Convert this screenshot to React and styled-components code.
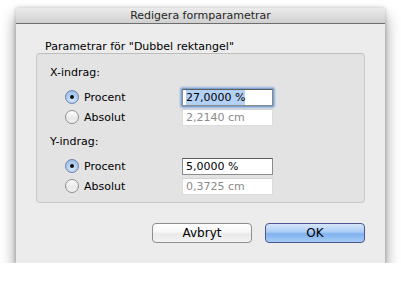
import React from "react";
import styled, { createGlobalStyle } from "styled-components";

const Global = createGlobalStyle`
  html, body { margin: 0; padding: 0; background: #ffffff; }
  body { font-family: "DejaVu Sans", "Lucida Grande", sans-serif; font-size: 11px; color: #000; }
`;

const Page = styled.div`
  padding: 8px 0 0 16px;
`;

const Window = styled.div`
  width: 369px;
  height: 255px;
  display: flex;
  flex-direction: column;
  background: #ececec;
  box-shadow: 0 9px 14px rgba(0, 0, 0, 0.45), 0 0 4px rgba(0, 0, 0, 0.22);
`;

const TitleBar = styled.div`
  height: 15px;
  flex: none;
  display: flex;
  align-items: center;
  justify-content: center;
  background: linear-gradient(#ebebeb, #d0d0d0);
  border-bottom: 1px solid #6d6d6d;
  color: #262626;
  font-size: 11px;
  line-height: 15px;
`;

const Body = styled.div`
  flex: 1;
  display: flex;
  flex-direction: column;
  padding: 16px 20px 20px 20px;
`;

const GroupLabel = styled.div`
  padding-left: 9px;
  height: 13px;
  line-height: 13px;
`;

const GroupBox = styled.div`
  height: 150px;
  box-sizing: border-box;
  border: 1px solid #c9c9c9;
  border-top-color: #bdbdbd;
  border-radius: 4px;
  background: #e3e3e3;
  padding: 12px 13px 0 13px;
  display: flex;
  flex-direction: column;
`;

const Section = styled.div`
  display: flex;
  flex-direction: column;
  margin-top: ${(p) => p.$top || 0}px;
`;

const SectionLabel = styled.div`
  height: 14px;
  line-height: 14px;
  margin-bottom: 7px;
`;

const Row = styled.div`
  height: 20px;
  display: flex;
  align-items: center;
  padding-left: 15px;
`;

const Radio = styled.span`
  width: 14px;
  height: 14px;
  box-sizing: border-box;
  border-radius: 50%;
  flex: none;
  border: 1px solid ${(p) => (p.$on ? "#6d82a8" : "#8e8e8e")};
  background: ${(p) =>
    p.$on
      ? "radial-gradient(circle at 50% 70%, #d4e6fb 0%, #a9c9ef 60%, #8fb3e2 100%)"
      : "linear-gradient(#ffffff, #e8e8e8 60%, #f4f4f4)"};
  display: flex;
  align-items: center;
  justify-content: center;
  &::after {
    content: "";
    width: 4px;
    height: 4px;
    border-radius: 50%;
    background: #111;
    display: ${(p) => (p.$on ? "block" : "none")};
  }
`;

const OptionLabel = styled.span`
  margin-left: 5px;
  width: 98px;
  flex: none;
`;

const Field = styled.div`
  width: 91px;
  height: 17px;
  box-sizing: border-box;
  background: #fff;
  border: 1px solid ${(p) => (p.$disabled ? "#dcdcdc" : "#8c8c8c")};
  border-top-color: ${(p) => (p.$disabled ? "#d2d2d2" : "#5e5e5e")};
  box-shadow: ${(p) =>
    p.$focus ? "0 0 0 1px #7da2ce, 0 0 2px 2px #8fb3e0" : "none"};
  border-radius: ${(p) => (p.$focus ? "1px" : "0")};
  padding-left: 3px;
  display: flex;
  align-items: center;
  color: ${(p) => (p.$disabled ? "#8a8a8a" : "#000")};
  line-height: 15px;
`;

const Selected = styled.span`
  background: #b3d1f5;
`;

const Buttons = styled.div`
  display: flex;
  justify-content: flex-end;
  gap: 13px;
  margin-top: 20px;
`;

const Button = styled.div`
  width: 100px;
  height: 20px;
  box-sizing: border-box;
  border-radius: 4px;
  display: flex;
  align-items: center;
  justify-content: center;
  font-size: 12px;
  border: 1px solid ${(p) => (p.$primary ? "#4e5590" : "#8e8e8e")};
  background: ${(p) =>
    p.$primary
      ? "linear-gradient(#d6e7fb, #a9ccf5 45%, #7fb1ef 55%, #a7cdf6)"
      : "linear-gradient(#ffffff, #f6f6f6 45%, #e9e9e9 55%, #f3f3f3)"};
`;

function Option({ label, on, value, disabled, focus }) {
  return (
    <Row>
      <Radio $on={on} />
      <OptionLabel>{label}</OptionLabel>
      <Field $disabled={disabled} $focus={focus}>
        {focus ? <Selected>{value}</Selected> : value}
      </Field>
    </Row>
  );
}

export default function App() {
  return (
    <Page>
      <Global />
      <Window>
        <TitleBar>Redigera formparametrar</TitleBar>
        <Body>
          <GroupLabel>Parametrar för "Dubbel rektangel"</GroupLabel>
          <GroupBox>
            <Section>
              <SectionLabel>X-indrag:</SectionLabel>
              <Option label="Procent" on value="27,0000 %" focus />
              <Option label="Absolut" value="2,2140 cm" disabled />
            </Section>
            <Section $top={8}>
              <SectionLabel>Y-indrag:</SectionLabel>
              <Option label="Procent" on value="5,0000 %" />
              <Option label="Absolut" value="0,3725 cm" disabled />
            </Section>
          </GroupBox>
          <Buttons>
            <Button>Avbryt</Button>
            <Button $primary>OK</Button>
          </Buttons>
        </Body>
      </Window>
    </Page>
  );
}
